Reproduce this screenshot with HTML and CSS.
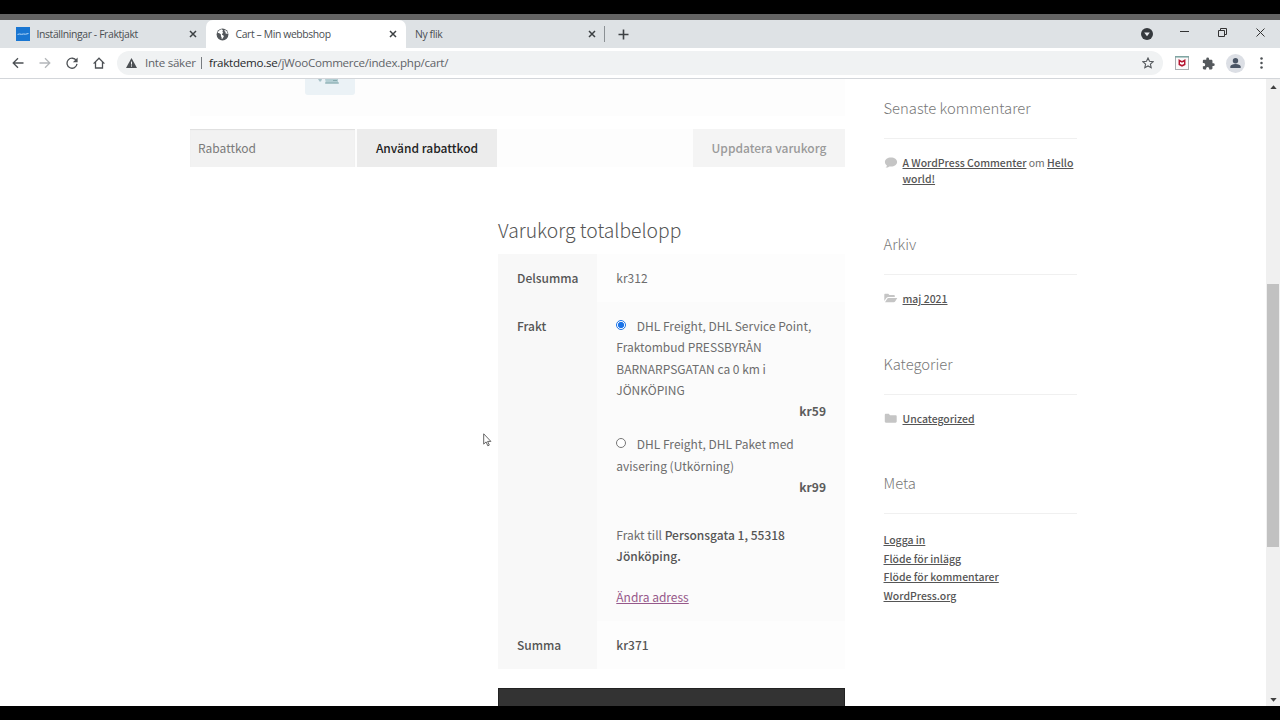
FILE: index.html
```html
<!DOCTYPE html>
<html lang="sv">
<head>
<meta charset="utf-8">
<title>Cart – Min webbshop</title>
<link rel="stylesheet" href="styles.css">
</head>
<body>
<div class="screen">
  <div class="tabs">
    <div class="tab tab-first">
      <svg class="favicon" width="14" height="14" viewBox="0 0 14 14"><rect width="14" height="14" fill="#1976d2"/><path d="M1.500 7.400l2-.4 2 .3 2-.3 2 .2 3-.7" stroke="#b5d8f7" stroke-width="1" fill="none"/></svg>
      <span class="tab-title t1">Inställningar - Fraktjakt</span>
      <svg class="x" width="8" height="8" viewBox="0 0 8 8"><path d="M1 1l6 6M7 1l-6 6"/></svg>
    </div>
    <div class="tab tab-active">
      <svg class="favicon" width="13" height="13" viewBox="0 0 13 13"><circle cx="6.500" cy="6.500" r="5.900" fill="#53575b"/><path d="M5.500 1.300C4 1.700 2.200 3 1.600 5c1.200.3 2.300.2 3.100 1.200.6.800-.2 1.700.6 2.500.5.500.3 1.600.4 2.300 1.100-.2 1.200-1.400 1.900-2.100.7-.8-.3-1.500-1.200-1.800C5.500 6.600 6.300 5.500 7 5.100c1-.5-.9-1-.5-1.700.2-.6.800-.9.200-1.500zM8.600 1.800c-.4 1 .2 1.600.8 2 .5.400-.2 1.100.3 1.600.6.500 1.300.2 2 .6C11.600 4.100 10.300 2.400 8.600 1.800z" fill="#fff"/></svg>
      <span class="tab-title t2">Cart – Min webbshop</span>
      <svg class="x" width="8" height="8" viewBox="0 0 8 8"><path d="M1 1l6 6M7 1l-6 6"/></svg>
    </div>
    <div class="tab tab-new">
      <span class="tab-title t3">Ny flik</span>
      <svg class="x" width="8" height="8" viewBox="0 0 8 8"><path d="M1 1l6 6M7 1l-6 6"/></svg>
    </div>
    <svg class="plus" width="11" height="11" viewBox="0 0 11 11"><path d="M5.500 .5v10M.5 5.500h10" stroke="#3c4043" stroke-width="1.600"/></svg>
    <div class="window-controls">
      <svg width="12" height="12" viewBox="0 0 12 12"><circle cx="6" cy="6" r="6" fill="#35393d"/><path d="M3.200 4.400h5.600L6 8.200z" fill="#e8eaed"/></svg>
      <svg class="raise min" width="9" height="9" viewBox="0 0 9 9"><path d="M0 3.500h9" stroke="#333" stroke-width="1"/></svg>
      <svg class="raise" width="9" height="9" viewBox="0 0 9 9" fill="none" stroke="#333"><path d="M.5 2.500h6v6h-6zM2.500 2.500v-2h6v6h-2"/></svg>
      <svg class="raise" width="9" height="9" viewBox="0 0 9 9"><path d="M.5.5l8 8M8.500.5l-8 8" stroke="#333" stroke-width="1"/></svg>
    </div>
  </div>

  <div class="toolbar">
    <svg width="12" height="12" viewBox="0 0 12 12" class="nav"><path d="M11.500 6H1.500M6 1.200L1.200 6 6 10.800"/></svg>
    <svg width="12" height="12" viewBox="0 0 12 12" class="nav faded"><path d="M.5 6h10M6 1.200L10.800 6 6 10.800"/></svg>
    <svg width="12" height="12" viewBox="0 0 12 12" class="nav"><path d="M10.300 3.600A5 5 0 1 0 11 6.900"/><path d="M11.600.4v4.800H6.900z" fill="#4c5054" stroke="none"/></svg>
    <svg width="12" height="12" viewBox="0 0 12 12" class="nav"><path d="M.6 6.600L6 1.200l5.400 5.400M2.500 5v6h7V5"/></svg>
    <div class="omnibox">
      <svg width="11" height="10" viewBox="0 0 11 10"><path d="M5.500 0L11 10H0z" fill="#4c5054"/><path d="M5.500 3.600v3M5.500 7.400v1.200" stroke="#f1f3f4"/></svg>
      <span class="insecure">Inte säker</span>
      <span class="bar"></span>
      <span class="url"><b>fraktdemo.se</b>/jWooCommerce/index.php/cart/</span>
      <svg class="star" width="12" height="12" viewBox="0 0 12 12"><path d="M6 1l1.500 3.300 3.600.4-2.700 2.400.8 3.600L6 8.900l-3.200 1.800.8-3.600L.9 4.700l3.600-.4z" fill="none" stroke="#55595d" stroke-width="1.100"/></svg>
    </div>
    <svg class="shield" width="14" height="14" viewBox="0 0 14 14"><rect x=".5" y=".5" width="13" height="13" fill="#fafafa" stroke="#a9adb0"/><path d="M0 .8h14" stroke="#7da5a2" stroke-width="1.500"/><path d="M4.300 4.300L7 5.900l2.700-1.600v4.200L7 9.800 4.300 8.500z" fill="#fff" stroke="#b51631" stroke-width="1.500"/></svg>
    <svg class="puzzle" width="13" height="13" viewBox="1 0 22 23"><path d="M20.500 11H19V7c0-1.100-.9-2-2-2h-4V3.500a2.500 2.500 0 0 0-5 0V5H4c-1.100 0-2 .9-2 2v3.800h1.500a2.700 2.700 0 0 1 0 5.400H2V20c0 1.100.9 2 2 2h3.800v-1.500a2.700 2.700 0 0 1 5.400 0V22H17c1.100 0 2-.9 2-2v-4h1.500a2.500 2.500 0 0 0 0-5z" fill="#55595d"/></svg>
    <svg class="avatar" width="19" height="19" viewBox="0 0 19 19"><circle cx="9.500" cy="9.500" r="9.500" fill="#dcdfe5"/><circle cx="9.500" cy="6.800" r="2.700" fill="#4a5565"/><path d="M4.300 14v-1.200c0-1.900 3.300-2.700 5.200-2.700s5.200.8 5.200 2.700V14z" fill="#4a5565"/></svg>
    <svg class="dots" width="3" height="12" viewBox="0 0 3 12" fill="#4c5054"><circle cx="1.500" cy="1.600" r="1.250"/><circle cx="1.500" cy="6" r="1.250"/><circle cx="1.500" cy="10.400" r="1.250"/></svg>
  </div>

  <div class="viewport">
    <div class="page">
      <main class="main">
        <div class="cart-item">
          <div class="thumb"><svg width="24" height="6" viewBox="0 0 24 6"><path d="M0 0h4L3 2.500H1.500z" fill="#a8c2c8"/><path d="M7 0h13v4.500H8z" fill="#b3ced3"/><path d="M7 4h14M15 1.500h4" stroke="#86aaae" stroke-width="1"/></svg></div>
        </div>
        <div class="coupon">
          <div class="coupon-input"><span class="c1">Rabattkod</span></div>
          <div class="btn apply"><span class="c2">Använd rabattkod</span></div>
          <div class="btn update"><span class="c3">Uppdatera varukorg</span></div>
        </div>
        <section class="totals">
          <h2><span>Varukorg totalbelopp</span></h2>
          <div class="row">
            <div class="th">Delsumma</div>
            <div class="td">kr312</div>
          </div>
          <div class="row shipping">
            <div class="th">Frakt</div>
            <div class="td">
              <div class="option">
                <i class="radio on"></i>DHL Freight, DHL Service Point,<br>Fraktombud PRESSBYRÅN<br>BARNARPSGATAN ca 0 km i<br>JÖNKÖPING
                <div class="price">kr59</div>
              </div>
              <div class="option">
                <i class="radio"></i>DHL Freight, DHL Paket med<br>avisering (Utkörning)
                <div class="price">kr99</div>
              </div>
              <div class="dest">Frakt till <b>Personsgata 1, 55318<br>Jönköping.</b></div>
              <a class="change">Ändra adress</a>
            </div>
          </div>
          <div class="row">
            <div class="th">Summa</div>
            <div class="td"><b>kr371</b></div>
          </div>
          <div class="checkout"></div>
        </section>
      </main>
      <aside class="side">
        <section class="widget comments">
          <h3>Senaste kommentarer</h3>
          <div class="item">
            <svg width="13" height="13" viewBox="0 0 13 13"><path d="M6.500 1.500C3 1.500.4 3.500.4 6c0 1.500.8 2.700 2 3.500-.1.900-.7 1.600-1.500 2.100 1.600.1 2.900-.4 3.900-1.200.5.100 1.100.1 1.700.1 3.500 0 6.100-2 6.100-4.500S10 1.500 6.500 1.500z" fill="#c5c5c5"/></svg>
            <p><a>A WordPress Commenter</a> om <a>Hello<br>world!</a></p>
          </div>
        </section>
        <section class="widget archive">
          <h3>Arkiv</h3>
          <div class="item">
            <svg width="14" height="13" viewBox="0 0 14 13"><path d="M.3 9V2.700c0-.6.400-1 1-1h3l1 1.200h4.500c.6 0 1 .4 1 1v1H4.300c-.8 0-1.500.4-2 1z" fill="#c5c5c5"/><path d="M1 10.300l2.200-3.500c.3-.5.700-.8 1.300-.8h8.800l-2.200 3.500c-.3.500-.7.800-1.300.8z" fill="#c5c5c5"/></svg>
            <p><a>maj 2021</a></p>
          </div>
        </section>
        <section class="widget cats">
          <h3>Kategorier</h3>
          <div class="item">
            <svg width="13" height="13" viewBox="0 0 13 13"><path d="M.3 9.600V2.900c0-.7.500-1.100 1.100-1.100h2.900L5.500 3.200h5.600c.6 0 1.100.4 1.100 1v5.400c0 .6-.5 1.100-1.100 1.100H1.400c-.6 0-1.100-.5-1.100-1.100z" fill="#c5c5c5"/></svg>
            <p><a>Uncategorized</a></p>
          </div>
        </section>
        <section class="widget meta">
          <h3>Meta</h3>
          <div class="links"><a>Logga in</a><a>Flöde för inlägg</a><a>Flöde för kommentarer</a><a>WordPress.org</a></div>
        </section>
      </aside>
    </div>
    <div class="scrollbar">
      <svg width="7" height="4" viewBox="0 0 7 4"><path d="M.3 4L3.500.3 6.700 4z" fill="#404040"/></svg>
      <div class="thumb-bar"></div>
      <svg width="7" height="4" viewBox="0 0 7 4"><path d="M.3 0L3.500 3.700 6.700 0z" fill="#404040"/></svg>
    </div>
  </div>
  <svg class="cursor" width="9" height="14" viewBox="0 0 9 14"><path d="M.7.800v10.300l2.400-2.200 1.700 3.900 1.500-.7-1.700-3.700h3.300z" fill="#fff" stroke="#555" stroke-width=".9"/></svg>
</div>
</body>
</html>
```
FILE: styles.css
```css
* { box-sizing: border-box; }
body { margin: 0; background: #000; }
h2, h3, p { margin: 0; }
svg { display: block; flex: none; }

.screen {
  position: relative;
  width: 1280px;
  height: 720px;
  overflow: hidden;
  background: #000;
  padding: 14px 0;
  display: flex;
  flex-direction: column;
  font-family: "Noto Sans CJK SC", "Open Sans", sans-serif;
}

.tabs {
  height: 34px;
  flex: none;
  display: flex;
  border-top: 6px solid #646464;
  background: #dee2e5;
  font: 10.400px/28px "Open Sans", sans-serif;
  letter-spacing: -.38px;
  color: #4a4e52;
}
.tab { display: flex; align-items: center; }
.tab-first { width: 206px; padding: 0 9px 0 16px; }
.tab-active { width: 200px; padding: 0 9px 0 10px; background: #fff; border-radius: 7px 7px 0 0; }
.tab-new { width: 199px; padding: 0 9px; position: relative; }
.tab-new::after { content: ""; position: absolute; right: 0; top: 6px; width: 1px; height: 16px; background: #8b9094; }
.favicon { margin-right: 6.500px; }
.tab-title { flex: 1; white-space: nowrap; }
.x { stroke: #3c4043; stroke-width: 1.5; }
.plus { margin: 9px 0 0 13px; }
.window-controls { margin-left: auto; display: flex; align-items: center; padding-right: 15px; gap: 29px; }
.window-controls .raise { margin-top: -4px; }
.window-controls .min { margin-left: -2px; }

.toolbar {
  height: 31px;
  flex: none;
  display: flex;
  align-items: center;
  background: #fff;
  border-bottom: 1px solid #d3d6da;
  padding: 0 17px 0 12px;
}
.nav { margin-right: 15px; fill: none; stroke: #4c5054; stroke-width: 1.3; }
.faded { stroke: #b4b7ba; }
.omnibox {
  width: 1046px;
  height: 24px;
  margin-left: -3px;
  border-radius: 12px;
  background: #f0f2f3;
  display: flex;
  align-items: center;
  padding: 0 9px;
  font: 11.600px/24px "Open Sans", sans-serif;
  letter-spacing: -.27px;
  color: #5f6368;
}
.insecure { margin-left: 8px; width: 56px; white-space: nowrap; }
.bar { width: 1px; height: 12px; background: #777b7f; }
.url { margin-left: 7px; white-space: nowrap; }
.url b { font-weight: 400; color: #27292c; }
.star { margin-left: auto; }
.shield { margin-left: 12px; }
.puzzle { margin-left: 13px; }
.avatar { margin-left: 11px; }
.dots { margin-left: auto; }

.viewport { flex: 1; min-height: 0; display: flex; background: #fff; }
.page { flex: 1; display: flex; padding-left: 190px; overflow: hidden; }
.main { width: 655px; font-size: 12px; line-height: 21.400px; color: #6d6d6d; }
.main b, .th { font-weight: 500; color: #555; }
.cart-item { height: 37px; background: #fdfdfd; padding-left: 115px; }
.thumb { width: 50px; height: 16px; background: #ebf2f6; border-radius: 0 0 3px 3px; padding-left: 13px; }
.coupon { display: flex; margin-top: 13px; height: 38px; background: #fdfdfd; line-height: 37px; white-space: nowrap; }
.coupon-input { width: 165px; padding-left: 8px; background: #f2f2f2; box-shadow: inset 0 1px 1px rgba(0,0,0,.08); color: #7a7a7a; }
.btn { text-align: center; font-weight: 500; }
.apply { width: 140px; margin-left: 2px; background: #ececec; color: #222; }
.update { width: 152px; margin-left: auto; background: #f4f4f4; color: #9a9a9a; }

.totals { width: 347px; margin: 49px 0 0 308px; }
.totals h2 { height: 38px; font-size: 19.300px; line-height: 28px; font-weight: 300; color: #555; white-space: nowrap; }
.row { display: flex; min-height: 48px; }
.th { width: 99px; padding: 13px 0 0 19px; background: #f8f8f8; }
.td { flex: 1; padding: 12.700px 19px 0 19.300px; background: #fdfdfd; white-space: nowrap; }
.shipping { height: 319px; }
.shipping .td { background: #fbfbfb; }
.option { margin-bottom: 11.500px; }
.radio { display: inline-block; width: 10px; height: 10px; margin-right: 10.500px; border: 1px solid #767676; border-radius: 50%; background: #fff; vertical-align: 1px; }
.radio.on { border-color: #1a73e8; background: radial-gradient(circle, #1a73e8 0 2.800px, #fff 3.400px); }
.price { text-align: right; font-weight: 700; color: #5c5c5c; }
.dest { margin-top: 26.500px; }
.change { display: inline-block; margin-top: 19px; color: #96588a; text-decoration: underline; }
.checkout { height: 20px; margin-top: 19px; background: #333; border: 1px solid #222; }

.side { width: 193px; margin-left: 38.500px; font-size: 10.450px; line-height: 16px; color: #6d6d6d; }
.widget h3 { height: 41px; line-height: 20px; font-size: 14.800px; font-weight: 300; color: #777; border-bottom: 1px solid #f0f0f0; white-space: nowrap; }
.item { display: flex; padding-top: 16px; }
.item p { white-space: nowrap; }
.item svg { width: 14px; margin-right: 5px; margin-top: 1px; }
.side a { font-weight: 500; color: #555; text-decoration: underline; }
.comments { padding-top: 19px; height: 155px; }
.archive { height: 120px; }
.cats { height: 119px; }
.links { display: flex; flex-direction: column; line-height: 18.700px; padding-top: 17px; }

.scrollbar { width: 14px; background: #f0f0f0; display: flex; flex-direction: column; align-items: center; padding: 6px 0 4px; }
.thumb-bar { width: 12px; height: 263px; margin: 195px 0 auto; background: #c1c1c1; }
.cursor { position: absolute; left: 483px; top: 433px; }
```
